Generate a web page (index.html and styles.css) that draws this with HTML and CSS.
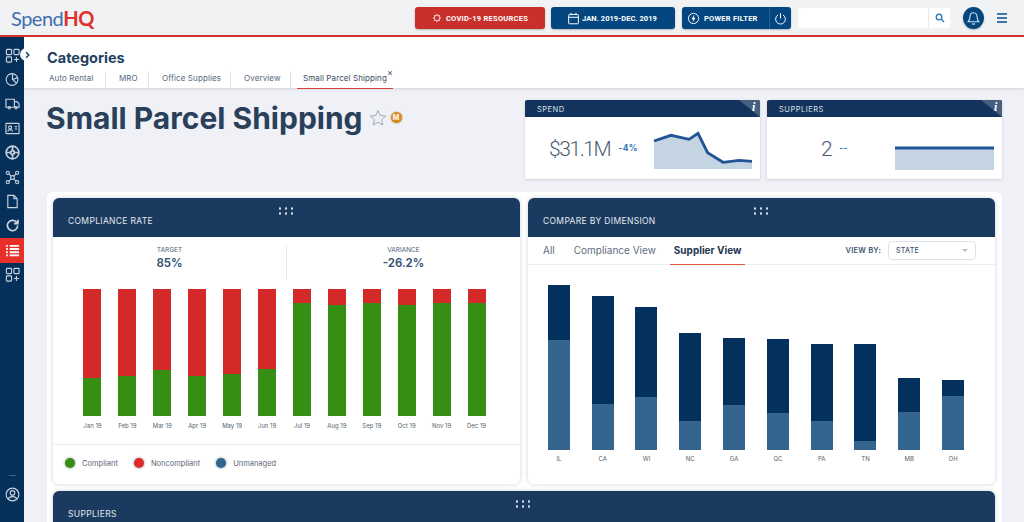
FILE: index.html
```html
<!DOCTYPE html>
<html lang="en">
<head>
    <meta charset="UTF-8">
    <meta name="viewport" content="width=device-width, initial-scale=1.0">
    <title>SpendHQ - Small Parcel Shipping</title>
    <link rel="stylesheet" href="styles.css">
</head>
<body>
    <header class="topbar">
        <div class="logo">Spend<b>HQ</b></div>
        <div class="top-actions">
            <button class="btn btn-red">
                <svg class="btn-icon" viewBox="0 0 16 16"><circle cx="8" cy="8" r="4.5"/><path d="M8 1.5v2M8 12.5v2M1.5 8h2M12.5 8h2M3.4 3.4l1.4 1.4M11.2 11.2l1.4 1.4M3.4 12.6l1.4-1.4M11.2 4.8l1.4-1.4"/></svg>
                COVID-19 RESOURCES
            </button>
            <button class="btn btn-blue btn-date">
                <svg class="btn-icon btn-icon-lg" viewBox="0 0 16 16"><rect x="2" y="3" width="12" height="11.5" rx="1"/><path d="M2 6.500h12M5 1v3M11 1v3"/></svg>
                JAN. 2019-DEC. 2019
            </button>
            <div class="btn-split">
                <button class="btn btn-blue btn-power">
                    <svg class="btn-icon btn-icon-lg" viewBox="0 0 16 16"><circle cx="8" cy="8" r="6.300"/><path class="solid" d="M9 3.500L5.500 8.800h2.200L7 12.500l3.500-5.300H8.300z"/></svg>
                    POWER FILTER
                </button>
                <button class="btn btn-blue btn-off">
                    <svg class="btn-icon btn-icon-lg" viewBox="0 0 16 16"><path d="M5 3.600a6 6 0 1 0 6 0M8 1.500v6.500"/></svg>
                </button>
            </div>
            <div class="search">
                <span class="search-input"></span>
                <span class="search-btn">
                    <svg viewBox="0 0 16 16" width="10" height="10"><circle cx="6.500" cy="6.500" r="4.500"/><path d="M10 10l4.500 4.500"/></svg>
                </span>
            </div>
            <span class="bell">
                <svg viewBox="0 0 16 16" width="15" height="15"><path d="M8 1.800c-2.700 0-3.800 2.200-3.800 4.600 0 2.500-.8 3.800-1.900 5.100h11.400c-1.100-1.300-1.900-2.600-1.900-5.100 0-2.400-1.100-4.600-3.800-4.600zM6.500 13.300c.4 1 2.600 1 3 0"/></svg>
            </span>
            <span class="burger"><i></i><i></i><i></i></span>
        </div>
    </header>

    <div class="layout">
        <nav class="sidebar">
            <span class="side-toggle">
                <svg viewBox="0 0 8 8" width="8" height="8"><path d="M3 1.200L5.800 4 3 6.800"/></svg>
            </span>
            <a class="side-item"><svg viewBox="0 0 16 16"><rect x="1.500" y="1.500" width="5.500" height="5.500" rx=".8"/><rect x="9.500" y="1.500" width="5.500" height="5.500" rx=".8"/><rect x="1.500" y="9.500" width="5.500" height="5.500" rx=".8"/><path d="M12.200 9.500v5.500M9.500 12.200H15"/></svg></a>
            <a class="side-item"><svg viewBox="0 0 16 16"><circle cx="7.500" cy="8" r="6.300"/><path d="M8 1.800V8l4.500 4M8 8l6-2"/></svg></a>
            <a class="side-item"><svg viewBox="0 0 16 16"><path d="M1 3.500h9v8.500H1zM10 6h3l2 2.500V12h-5"/><circle cx="4.500" cy="12.500" r="1.300"/><circle cx="11.800" cy="12.500" r="1.300"/></svg></a>
            <a class="side-item"><svg viewBox="0 0 16 16"><rect x="1" y="2.500" width="14" height="11" rx=".8"/><circle cx="5.500" cy="6.800" r="1.600"/><path d="M3 11.200c.3-2.600 4.700-2.600 5 0M10.500 6h2.500M10.500 8.500h2.500"/></svg></a>
            <a class="side-item"><svg class="bold" viewBox="0 0 16 16"><circle cx="8" cy="8" r="6.800"/><circle cx="8" cy="8" r="2"/><path d="M8 1.200v4.800M8 10v4.800M1.200 8h4.800M10 8h4.800"/></svg></a>
            <a class="side-item"><svg viewBox="0 0 16 16"><circle cx="3" cy="3" r="1.700"/><circle cx="13" cy="3" r="1.700"/><circle cx="3" cy="13" r="1.700"/><circle cx="13" cy="13" r="1.700"/><circle cx="8" cy="8" r="2"/><path d="M4.200 4.200l2.400 2.400M11.800 4.200L9.400 6.600M4.200 11.800l2.400-2.400M11.800 11.800L9.400 9.400"/></svg></a>
            <a class="side-item"><svg viewBox="0 0 16 16"><path d="M3 1.500h6.500L13 5v9.500H3zM9.500 1.500V5H13"/></svg></a>
            <a class="side-item"><svg class="bold" viewBox="0 0 16 16"><path d="M13.500 8a5.500 5.500 0 1 1-1.600-3.900L13.500 6M13.800 1.800V6H9.600"/></svg></a>
            <a class="side-item side-active"><svg viewBox="0 0 16 16"><path class="thick" d="M1.200 3h1.800M5 3h10M1.200 6.400h1.800M5 6.400h10M1.200 9.800h1.800M5 9.800h10M1.200 13.200h1.800M5 13.200h10"/></svg></a>
            <a class="side-item"><svg viewBox="0 0 16 16"><rect x="1.500" y="1.500" width="5.500" height="5.500" rx=".8"/><rect x="9.500" y="1.500" width="5.500" height="5.500" rx=".8"/><rect x="1.500" y="9.500" width="5.500" height="5.500" rx=".8"/><path d="M12.200 9.500v5.500M9.500 12.200H15"/></svg></a>
            <div class="side-bottom">
                <span class="side-dash"></span>
                <a class="side-item"><svg viewBox="0 0 16 16"><circle cx="8" cy="8" r="6.800"/><circle cx="8" cy="6.300" r="2.400"/><path d="M3.500 13c.8-3.600 8.200-3.600 9 0"/></svg></a>
            </div>
        </nav>

        <main class="main">
            <section class="subhead">
                <h2>Categories</h2>
                <div class="tabs">
                    <a class="tab">Auto Rental</a>
                    <a class="tab">MRO</a>
                    <a class="tab">Office Supplies</a>
                    <a class="tab">Overview</a>
                    <a class="tab tab-active">Small Parcel Shipping</a>
                    <span class="tab-close">&times;</span>
                </div>
            </section>

            <section class="hero">
                <div class="hero-title">
                    <h1>Small Parcel Shipping</h1>
                    <svg class="star" viewBox="0 0 20 20" width="18" height="18"><path d="M10 1.800l2.500 5.400 5.900.7-4.400 4 1.200 5.800-5.200-3-5.200 3 1.200-5.800-4.400-4 5.900-.7z"/></svg>
                    <span class="badge">M</span>
                </div>
                <div class="kpi kpi-spend">
                    <div class="kpi-head">SPEND<span class="kpi-info"><i>i</i></span></div>
                    <div class="kpi-body">
                        <span class="kpi-value">$31.1M</span>
                        <span class="kpi-delta">-4%</span>
                        <svg class="spark" viewBox="0 0 98 36" width="98" height="36">
                            <path class="spark-area" d="M0 8L17 2.300L35 6.300L44 .3L53.600 19.700L69 29.300L85 27.300L98 28.300V36H0z"/>
                            <path class="spark-line" d="M0 8L17 2.300L35 6.300L44 .3L53.600 19.700L69 29.300L85 27.300L98 28.300"/>
                        </svg>
                    </div>
                </div>
                <div class="kpi kpi-suppliers">
                    <div class="kpi-head">SUPPLIERS<span class="kpi-info"><i>i</i></span></div>
                    <div class="kpi-body">
                        <span class="kpi-value">2</span>
                        <span class="kpi-delta">--</span>
                        <svg class="spark" viewBox="0 0 99 25" width="99" height="25">
                            <path class="spark-area" d="M0 3H99V25H0z"/>
                            <path class="spark-line" d="M0 3H99"/>
                        </svg>
                    </div>
                </div>
            </section>

            <section class="board">
                <article class="panel">
                    <div class="panel-head"><span class="grip"></span>COMPLIANCE RATE</div>
                    <div class="stats">
                        <div class="stat"><small>TARGET</small><strong>85%</strong></div>
                        <div class="stat"><small>VARIANCE</small><strong>-26.2%</strong></div>
                    </div>
                    <div class="months">
                        <div class="month"><div class="stack"><i class="red"></i><i class="green" style="height:38px"></i></div><span>Jan 19</span></div>
                        <div class="month"><div class="stack"><i class="red"></i><i class="green" style="height:40px"></i></div><span>Feb 19</span></div>
                        <div class="month"><div class="stack"><i class="red"></i><i class="green" style="height:46px"></i></div><span>Mar 19</span></div>
                        <div class="month"><div class="stack"><i class="red"></i><i class="green" style="height:40px"></i></div><span>Apr 19</span></div>
                        <div class="month"><div class="stack"><i class="red"></i><i class="green" style="height:42px"></i></div><span>May 19</span></div>
                        <div class="month"><div class="stack"><i class="red"></i><i class="green" style="height:47px"></i></div><span>Jun 19</span></div>
                        <div class="month"><div class="stack"><i class="red"></i><i class="green" style="height:113px"></i></div><span>Jul 19</span></div>
                        <div class="month"><div class="stack"><i class="red"></i><i class="green" style="height:111px"></i></div><span>Aug 19</span></div>
                        <div class="month"><div class="stack"><i class="red"></i><i class="green" style="height:113px"></i></div><span>Sep 19</span></div>
                        <div class="month"><div class="stack"><i class="red"></i><i class="green" style="height:111px"></i></div><span>Oct 19</span></div>
                        <div class="month"><div class="stack"><i class="red"></i><i class="green" style="height:113px"></i></div><span>Nov 19</span></div>
                        <div class="month"><div class="stack"><i class="red"></i><i class="green" style="height:113px"></i></div><span>Dec 19</span></div>
                    </div>
                    <div class="legend">
                        <span class="legend-item"><i class="dot dot-green"></i>Compliant</span>
                        <span class="legend-item"><i class="dot dot-red"></i>Noncompliant</span>
                        <span class="legend-item"><i class="dot dot-blue"></i>Unmanaged</span>
                    </div>
                </article>

                <article class="panel">
                    <div class="panel-head"><span class="grip"></span>COMPARE BY DIMENSION</div>
                    <div class="view-tabs">
                        <a class="view-tab">All</a>
                        <a class="view-tab">Compliance View</a>
                        <a class="view-tab view-active">Supplier View</a>
                        <div class="view-by">
                            <label>VIEW BY:</label>
                            <div class="select">STATE<span class="caret"></span></div>
                        </div>
                    </div>
                    <div class="states">
                        <div class="state"><div class="stack-b"><i class="dark" style="height:55px"></i><i class="light" style="height:110px"></i></div><span>IL</span></div>
                        <div class="state"><div class="stack-b"><i class="dark" style="height:108px"></i><i class="light" style="height:46px"></i></div><span>CA</span></div>
                        <div class="state"><div class="stack-b"><i class="dark" style="height:90px"></i><i class="light" style="height:53px"></i></div><span>WI</span></div>
                        <div class="state"><div class="stack-b"><i class="dark" style="height:88px"></i><i class="light" style="height:29px"></i></div><span>NC</span></div>
                        <div class="state"><div class="stack-b"><i class="dark" style="height:67px"></i><i class="light" style="height:45px"></i></div><span>GA</span></div>
                        <div class="state"><div class="stack-b"><i class="dark" style="height:74px"></i><i class="light" style="height:37px"></i></div><span>QC</span></div>
                        <div class="state"><div class="stack-b"><i class="dark" style="height:77px"></i><i class="light" style="height:29px"></i></div><span>PA</span></div>
                        <div class="state"><div class="stack-b"><i class="dark" style="height:97px"></i><i class="light" style="height:9px"></i></div><span>TN</span></div>
                        <div class="state"><div class="stack-b"><i class="dark" style="height:34px"></i><i class="light" style="height:38px"></i></div><span>MB</span></div>
                        <div class="state"><div class="stack-b"><i class="dark" style="height:16px"></i><i class="light" style="height:54px"></i></div><span>OH</span></div>
                    </div>
                </article>

                <article class="panel panel-wide">
                    <div class="panel-head"><span class="grip"></span>SUPPLIERS</div>
                </article>
            </section>
        </main>
    </div>
</body>
</html>
```

FILE: styles.css
```css
* {
    box-sizing: border-box;
}
html, body {
    height: 522px;
    overflow: hidden;
}
body {
    margin: 0;
    font-family: "Inter", "Open Sans", sans-serif;
    background-color: #eff1f6;
    color: #2a3f5a;
    display: flex;
    flex-direction: column;
}
svg {
    fill: none;
    stroke: currentColor;
    stroke-width: 1.2;
    display: block;
}

/* top bar */
.topbar {
    height: 37px;
    flex: none;
    display: flex;
    justify-content: space-between;
    background-color: #f1f2f3;
    border-bottom: 2px solid #d6312e;
    padding: 7px 17px 0 11px;
}
.logo {
    font-family: "Lato", sans-serif;
    font-size: 20px;
    line-height: 22px;
    letter-spacing: -0.5px;
    color: #3f6dae;
}
.logo b {
    color: #e0302d;
    font-weight: 700;
}
.top-actions {
    display: flex;
    align-items: flex-start;
}
.btn {
    height: 22px;
    border: none;
    border-radius: 3px;
    padding: 0;
    color: #fff;
    font-family: "Roboto", sans-serif;
    font-size: 7.5px;
    font-weight: 700;
    letter-spacing: 0.25px;
    display: flex;
    align-items: center;
    justify-content: center;
    gap: 4px;
    box-shadow: 0 1px 2px rgba(0,0,0,0.25);
}
.btn-red {
    width: 130px;
    background-color: #c9302c;
}
.btn-blue {
    background-color: #04467f;
}
.btn-date {
    width: 124px;
    margin-left: 6px;
    padding-right: 2px;
    gap: 2px;
    letter-spacing: 0.05px;
}
.btn-icon {
    width: 10px;
    height: 10px;
    flex: none;
}
.btn-icon-lg {
    width: 13px;
    height: 13px;
}
.btn-icon .solid {
    fill: currentColor;
    stroke: none;
}
.btn-split {
    display: flex;
    margin-left: 7px;
}
.btn-power {
    width: 87px;
    border-radius: 3px 0 0 3px;
    justify-content: flex-start;
    padding-left: 5px;
}
.btn-off {
    width: 22px;
    border-radius: 0 3px 3px 0;
    border-left: 1px solid #2c6397;
}
.search {
    width: 152px;
    height: 20px;
    margin: 1px 0 0 7px;
    display: flex;
    background-color: #fff;
    border-radius: 3px;
}
.search-input {
    flex: 1;
}
.search-btn {
    width: 22px;
    border-left: 1px solid #e6e8ec;
    color: #2f7cb8;
    display: flex;
    align-items: center;
    justify-content: center;
}
.search-btn svg {
    stroke-width: 2.2;
}
.bell {
    width: 21px;
    height: 22px;
    margin-left: 13px;
    border-radius: 50%;
    background-color: #04467f;
    color: #cfe0ef;
    display: flex;
    align-items: center;
    justify-content: center;
    box-shadow: 0 1px 2px rgba(0,0,0,0.25);
}
.burger {
    width: 10px;
    margin: 6px 0 0 13px;
    display: flex;
    flex-direction: column;
    gap: 2px;
}
.burger i {
    height: 2px;
    background-color: #3d77a8;
}

/* layout */
.layout {
    flex: 1;
    display: flex;
    min-height: 0;
}
.sidebar {
    width: 24px;
    flex: none;
    background-color: #04305a;
    color: #c9d3de;
    padding-top: 6px;
    display: flex;
    flex-direction: column;
    position: relative;
}
.side-item {
    height: 24.4px;
    flex: none;
    display: flex;
    align-items: center;
    justify-content: center;
}
.side-item svg {
    width: 15px;
    height: 15px;
}
.side-item .bold {
    stroke-width: 1.8;
}
.side-active {
    background-color: #e8302a;
    color: #fff;
}
.side-active .thick {
    stroke-width: 2;
}
.side-toggle {
    position: absolute;
    left: 20px;
    top: 11px;
    width: 13px;
    height: 13px;
    border-radius: 50%;
    background-color: #fff;
    color: #1b4a78;
    display: flex;
    align-items: center;
    justify-content: center;
    z-index: 2;
}
.side-toggle svg {
    stroke-width: 1.6;
}
.side-bottom {
    margin-top: auto;
    padding-bottom: 15px;
    display: flex;
    flex-direction: column;
    align-items: center;
}
.side-dash {
    width: 7px;
    height: 1px;
    margin-bottom: 7px;
    background-color: #2a6a9e;
}
.side-bottom .side-item {
    width: 24px;
}

/* main */
.main {
    flex: 1;
    min-width: 0;
    position: relative;
}
.subhead {
    height: 51px;
    background-color: #fff;
    padding: 13px 0 0 23px;
    box-shadow: 0 1px 3px rgba(0,0,0,0.12);
}
.subhead h2 {
    margin: 0;
    font-size: 14.5px;
    line-height: 16px;
    font-weight: 700;
    color: #233f60;
}
.tabs {
    display: flex;
    margin-top: 5px;
    position: relative;
}
.tab {
    height: 17px;
    font-size: 8px;
    line-height: 15px;
    color: #56687c;
    letter-spacing: 0.1px;
    padding-left: 2px;
    margin-right: 11px;
    border-right: 1px solid #dfe2e6;
    white-space: nowrap;
}
.tab:nth-child(1) {
    width: 59px;
}
.tab:nth-child(2) {
    width: 32px;
}
.tab:nth-child(3) {
    width: 71px;
}
.tab:nth-child(4) {
    width: 49px;
}
.tab.tab-active {
    width: 96px;
    margin: 0 0 0 -5px;
    padding: 0 0 0 6px;
    border-right: none;
    border-bottom: 1.5px solid #d6413a;
    color: #3c4d62;
    height: 17.5px;
}
.tab-close {
    position: absolute;
    left: 340px;
    top: -4px;
    font-size: 9px;
    line-height: 12px;
    color: #3c4d62;
}

.hero {
    height: 104px;
    padding: 12px 22px 0 22px;
    display: flex;
    align-items: flex-start;
}
.hero-title {
    flex: 1;
    display: flex;
    align-items: flex-start;
}
.hero-title h1 {
    margin: 0;
    font-size: 30px;
    line-height: 36px;
    font-weight: 700;
    color: #2a3f5a;
    white-space: nowrap;
}
.star {
    margin: 9px 0 0 6px;
    stroke: #9aa0a8;
    stroke-width: 1;
}
.badge {
    width: 11px;
    height: 11px;
    margin: 12px 0 0 4px;
    border-radius: 50%;
    background-color: #dd8a1a;
    color: #fff;
    font-size: 7px;
    font-weight: 700;
    line-height: 11px;
    text-align: center;
    box-shadow: 0 0 2px rgba(0,0,0,0.4);
}

.kpi {
    width: 235px;
    height: 79px;
    background-color: #fff;
    border-radius: 2px;
    box-shadow: 0 1px 3px rgba(0,0,0,0.15);
}
.kpi-suppliers {
    margin-left: 7px;
}
.kpi-head {
    height: 17px;
    background-color: #14335c;
    color: #d9e0e8;
    font-size: 7.5px;
    line-height: 19px;
    letter-spacing: 0.5px;
    padding-left: 12px;
    position: relative;
    overflow: hidden;
    border-radius: 2px 2px 0 0;
}
.kpi-info {
    position: absolute;
    right: 0;
    top: 0;
    width: 0;
    height: 0;
    border-style: solid;
    border-width: 0 21px 17px 0;
    border-color: transparent #45607f transparent transparent;
}
.kpi-info i {
    position: absolute;
    left: 13px;
    top: -2px;
    color: #fff;
    font-family: "Liberation Serif", serif;
    font-size: 12px;
    font-weight: 700;
}
.kpi-body {
    height: 62px;
    display: flex;
    align-items: flex-start;
    position: relative;
}
.kpi-value {
    font-family: "Roboto", sans-serif;
    font-weight: 300;
    font-size: 21px;
    line-height: 26px;
    letter-spacing: -1.4px;
    color: #4d5d70;
    margin-top: 19px;
}
.kpi-delta {
    font-size: 8.5px;
    font-weight: 700;
    color: #3473b2;
    line-height: 10px;
    letter-spacing: 0.3px;
    margin: 26px 0 0 8px;
}
.kpi-spend .kpi-value {
    margin-left: 24px;
}
.kpi-suppliers .kpi-value {
    margin-left: 54px;
}
.spark {
    position: absolute;
    overflow: visible;
}
.kpi-spend .spark {
    left: 129px;
    top: 16px;
}
.kpi-suppliers .spark {
    left: 128px;
    top: 28px;
}
.spark-area {
    fill: #c5d4e3;
    stroke: none;
}
.spark-line {
    stroke: #205495;
    stroke-width: 2.8;
}

/* dashboard */
.board {
    width: 955px;
    height: 340px;
    margin-left: 23px;
    padding: 6px 6px 0;
    background-color: #fff;
    border-radius: 6px 6px 0 0;
    display: grid;
    grid-template-columns: 467px 467px;
    grid-template-rows: 286px 1fr;
    column-gap: 8px;
    row-gap: 7px;
}
.panel {
    background-color: #fff;
    border-radius: 6px;
    box-shadow: 0 0 4px rgba(30,50,80,0.22);
    overflow: hidden;
}
.panel-wide {
    grid-column: 1 / 3;
}
.panel-head {
    height: 39px;
    background-color: #1a3b5f;
    color: #e2e7ec;
    font-size: 8.5px;
    letter-spacing: 0.33px;
    padding: 17px 0 0 15px;
    line-height: 12px;
    position: relative;
}
.grip {
    position: absolute;
    left: 50%;
    top: 8px;
    margin-left: -10px;
    width: 18px;
    height: 10px;
    background-image: radial-gradient(circle, #d6dde5 1px, transparent 1.3px);
    background-size: 6px 5px;
}

.stats {
    height: 34px;
    margin-top: 9px;
    display: flex;
}
.stat {
    flex: 1;
    text-align: center;
}
.stat + .stat {
    border-left: 1px solid #e7e9ec;
}
.stat small {
    display: block;
    font-size: 6.5px;
    line-height: 8px;
    color: #4e6079;
}
.stat strong {
    display: block;
    margin-top: 2px;
    font-size: 11.5px;
    line-height: 14px;
    font-weight: 600;
    color: #2d4c70;
}
.months {
    height: 156px;
    margin-top: 9px;
    padding: 0 26px 0 22px;
    display: grid;
    grid-template-columns: repeat(12, 1fr);
    border-bottom: 1px solid #e8ebee;
}
.month {
    display: flex;
    flex-direction: column;
    align-items: center;
}
.stack {
    width: 18px;
    height: 127px;
    display: flex;
    flex-direction: column;
}
.stack i {
    display: block;
}
.stack .red {
    flex: 1;
    background-color: #d32a29;
}
.stack .green {
    background-color: #368e14;
}
.month span {
    margin-top: 6px;
    font-size: 6px;
    line-height: 8px;
    color: #555f6c;
    white-space: nowrap;
}
.legend {
    height: 36px;
    padding-left: 12px;
    display: flex;
    align-items: center;
    gap: 16px;
}
.legend-item {
    display: flex;
    align-items: center;
    gap: 7px;
    font-size: 7.5px;
    color: #5b6878;
}
.dot {
    width: 10px;
    height: 10px;
    border-radius: 50%;
    box-shadow: 0 0 3px rgba(0,0,0,0.45);
}
.dot-green {
    background-color: #368e14;
}
.dot-red {
    background-color: #e0292a;
}
.dot-blue {
    background-color: #31668f;
}

.view-tabs {
    height: 28px;
    display: flex;
    align-items: flex-start;
    padding-left: 15px;
    border-bottom: 1px solid #eceef0;
}
.view-tab {
    height: 28px;
    font-size: 10px;
    line-height: 27px;
    color: #5e6c7c;
    margin-right: 19px;
}
.view-active {
    font-weight: 700;
    color: #1d3553;
    padding: 0 3px 0 4px;
    position: relative;
    left: -5px;
    border-bottom: 1.5px solid #e0593e;
}
.view-by {
    margin-left: auto;
    margin-right: 19px;
    padding-top: 4px;
    display: flex;
    align-items: center;
    gap: 7px;
}
.view-by label {
    font-size: 7.5px;
    font-weight: 600;
    color: #3a5474;
    letter-spacing: 0.2px;
}
.select {
    width: 88px;
    height: 19px;
    border: 1px solid #dfe3e8;
    border-radius: 4px;
    padding-left: 7px;
    font-size: 7px;
    font-weight: 500;
    line-height: 17px;
    letter-spacing: 0.3px;
    color: #3a5474;
    position: relative;
}
.caret {
    position: absolute;
    right: 7px;
    top: 7px;
    border-style: solid;
    border-width: 3px 3px 0;
    border-color: #b9c0c8 transparent transparent;
}
.states {
    padding-left: 9px;
    height: 194px;
    display: grid;
    grid-template-columns: repeat(10, 43.8px);
}
.state {
    display: flex;
    flex-direction: column;
    align-items: center;
}
.stack-b {
    width: 22px;
    height: 185px;
    display: flex;
    flex-direction: column;
    justify-content: flex-end;
}
.stack-b i {
    display: block;
}
.stack-b .dark {
    background-color: #03305c;
}
.stack-b .light {
    background-color: #33658f;
}
.state span {
    margin-top: 5px;
    font-size: 6px;
    line-height: 8px;
    color: #555f6c;
}
```
